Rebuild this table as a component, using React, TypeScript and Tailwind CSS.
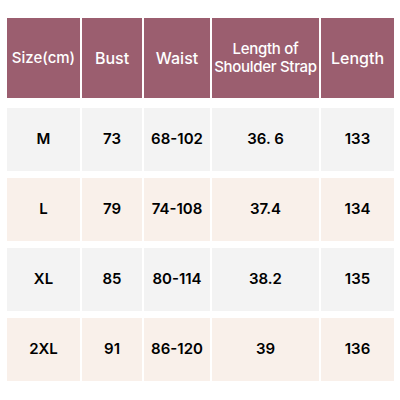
const cols = ['w-[73px]', 'w-[60px]', 'w-[66px]', 'w-[107px]', 'w-[73px]']

const rows = [
  { bg: 'bg-[#f3f3f3]', cells: ['M', '73', '68-102', '36. 6', '133'] },
  { bg: 'bg-[#f9f0ea]', cells: ['L', '79', '74-108', '37.4', '134'] },
  { bg: 'bg-[#f3f3f3]', cells: ['XL', '85', '80-114', '38.2', '135'] },
  { bg: 'bg-[#f9f0ea]', cells: ['2XL', '91', '86-120', '39', '136'] },
]

export default function App() {
  return (
    <div className="w-[400px] h-[400px] bg-white pt-[18px] pl-[7px] font-['Inter',sans-serif]">
      <div className="flex gap-[2px] h-[80px] font-medium text-white">
        <div className={`${cols[0]} bg-[#9b5e6f] flex items-center justify-center text-[15px]`}>Size(cm)</div>
        <div className={`${cols[1]} bg-[#9b5e6f] flex items-center justify-center text-[16px]`}>Bust</div>
        <div className={`${cols[2]} bg-[#9b5e6f] flex items-center justify-center text-[16px]`}>Waist</div>
        <div className={`${cols[3]} bg-[#9b5e6f] flex items-center justify-center text-center text-[15px] leading-[18px] tracking-[-0.3px]`}>
          Length of<br />Shoulder Strap
        </div>
        <div className={`${cols[4]} bg-[#9b5e6f] flex items-center justify-center text-[16px]`}>Length</div>
      </div>
      <div className="flex flex-col gap-[7px] mt-[10px]">
        {rows.map((r) => (
          <div key={r.cells[0]} className="flex gap-[2px] h-[63px]">
            {r.cells.map((c, i) => (
              <div
                key={i}
                className={`${cols[i]} ${r.bg} flex items-center justify-center text-[15px] font-semibold text-black`}
              >
                {c}
              </div>
            ))}
          </div>
        ))}
      </div>
    </div>
  )
}
